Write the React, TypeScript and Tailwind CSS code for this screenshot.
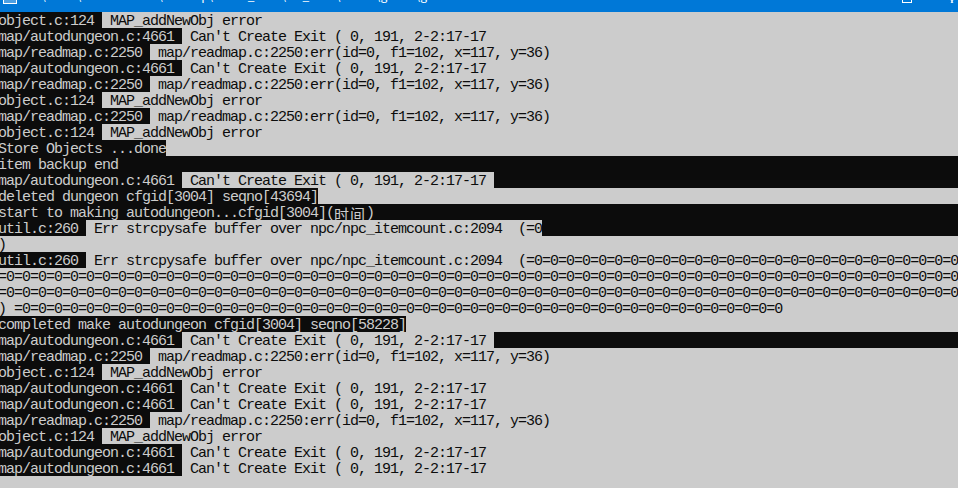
import React from 'react';

// [text, inverted, cjk]
type Seg = [string, boolean, boolean?];
type Line = { segs: Seg[]; fill?: boolean };

const exitMsg = "Can't Create Exit ( 0, 191, 2-2:17-17";
const errMsg = 'map/readmap.c:2250:err(id=0, f1=102, x=117, y=36)';
const strcpyMsg = 'Err strcpysafe buffer over npc/npc_itemcount.c:2094  (';

const tagged = (file: string, msg: string, fill = false): Line => ({
  segs: [
    [file + ' ', true],
    [' ' + msg + (fill ? ' ' : ''), false],
  ],
  fill,
});

const obj = () => tagged('object.c:124', 'MAP_addNewObj error');
const dun = (fill = false) => tagged('map/autodungeon.c:4661', exitMsg, fill);
const rd = () => tagged('map/readmap.c:2250', errMsg);

const lines: Line[] = [
  obj(),
  dun(),
  rd(),
  dun(),
  rd(),
  obj(),
  rd(),
  obj(),
  { segs: [['Store Objects ...done', true]] },
  { segs: [['item backup end', true]], fill: true },
  dun(true),
  { segs: [['deleted dungeon cfgid[3004] seqno[43694]', true]] },
  {
    segs: [
      ['start to making autodungeon...cfgid[3004](', true],
      ['时间', true, true],
      [')', true],
    ],
    fill: true,
  },
  { segs: [['util.c:260 ', true], [' ' + strcpyMsg + '=0', false]], fill: true },
  { segs: [[')', false]] },
  { segs: [['util.c:260 ', true], [' ' + strcpyMsg + '=0'.repeat(27), false]] },
  { segs: [['=0'.repeat(60), false]] },
  { segs: [['=0'.repeat(60), false]] },
  { segs: [[') ' + '=0'.repeat(48), false]] },
  { segs: [['completed make autodungeon cfgid[3004] seqno[58228]', true]] },
  dun(true),
  rd(),
  obj(),
  dun(),
  dun(),
  rd(),
  obj(),
  dun(),
  dun(),
];

function ConsoleLine({ segs, fill }: Line) {
  return (
    <div className={`flex h-4 whitespace-pre ${fill ? 'bg-[#0c0c0c]' : ''}`}>
      {segs.map(([text, inv, cjk], i) => (
        <span
          key={i}
          className={`h-4 pt-[2px] leading-4 ${inv ? 'bg-[#0c0c0c] text-[#cccccc]' : 'bg-[#cccccc] text-[#0c0c0c]'} ${
            cjk ? "font-['Noto_Sans_CJK_SC',sans-serif] tracking-[1px]" : ''
          }`}
        >
          {text}
        </span>
      ))}
    </div>
  );
}

function TitleBar() {
  return (
    <div className="h-3 shrink-0 bg-[#0078d7] overflow-hidden flex items-start relative">
      <div className="ml-[3px] w-[14px] h-[4px] border-x border-b border-white bg-white/30" />
      <div className="ml-[13px] -mt-[11px] text-white text-[12px] leading-[12px] font-['Noto_Sans_CJK_SC',sans-serif] whitespace-pre">
        C:\Users\Administrator\Desktop\server_2016\svr_0322\server\gmsvr\gmsvr.exe
      </div>
      <div className="absolute right-[46px] top-0 w-[10px] h-[3px] border-x border-b border-white" />
      <svg className="absolute right-0 top-0" width="12" height="4" viewBox="0 0 12 4">
        <path d="M1 -6 L7 3 M11 -6 L5 3" stroke="white" strokeWidth="1" />
      </svg>
    </div>
  );
}

export default function App() {
  return (
    <div className="w-[958px] h-[488px] overflow-hidden bg-[#cccccc] flex flex-col">
      <TitleBar />
      <div className="-ml-[2px] w-[960px] font-['Liberation_Mono',monospace] text-[15px] tracking-[-1px]">
        {lines.map((l, i) => (
          <ConsoleLine key={i} {...l} />
        ))}
      </div>
    </div>
  );
}
